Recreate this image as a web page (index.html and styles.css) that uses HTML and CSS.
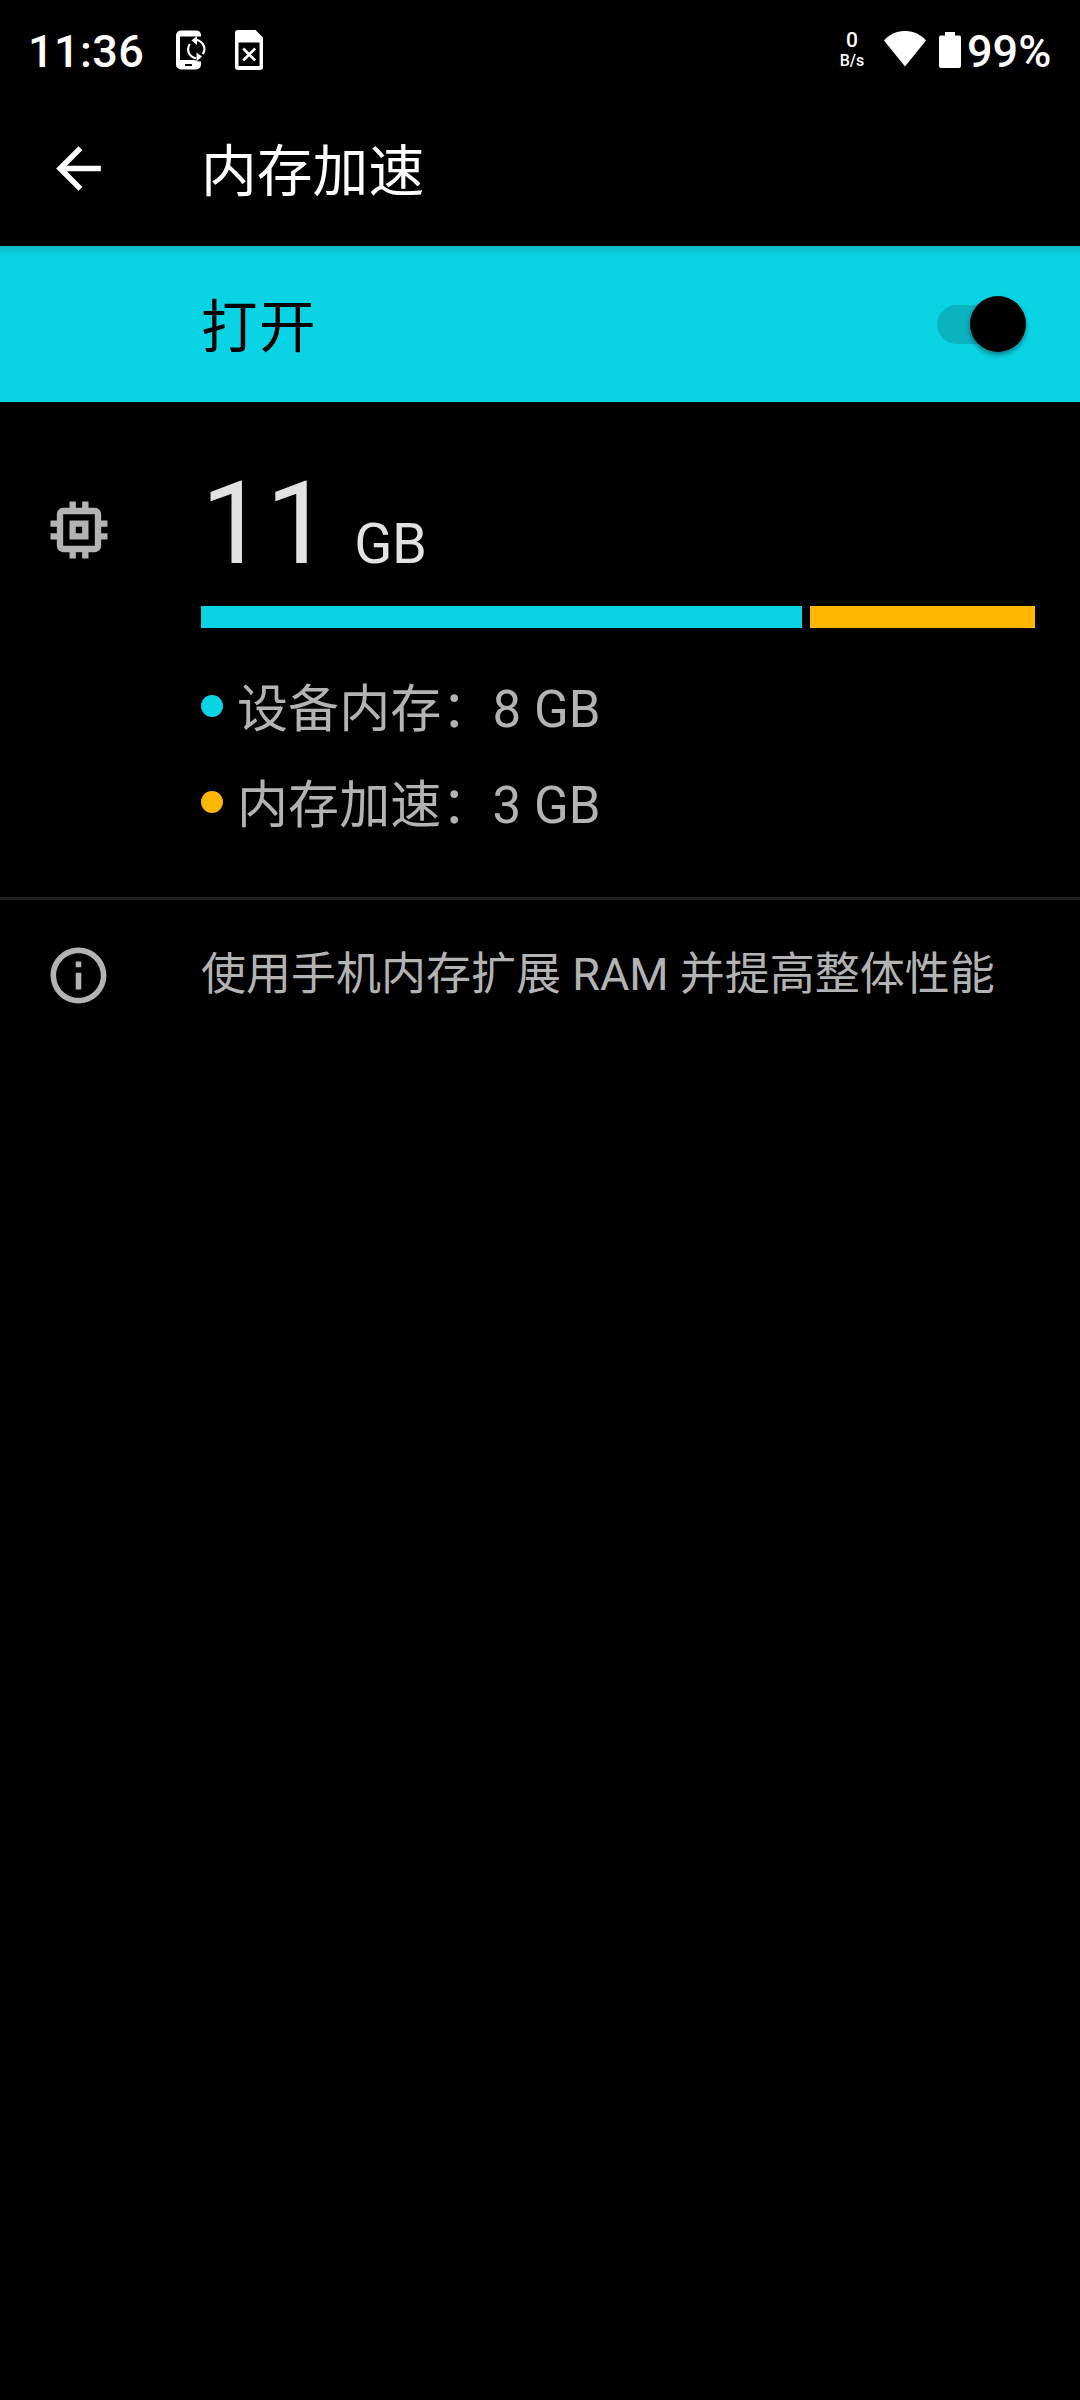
FILE: index.html
```html
<!DOCTYPE html>
<html lang="zh-CN">
<head>
<meta charset="utf-8">
<title>内存加速</title>
<link rel="stylesheet" href="styles.css">
</head>
<body>
<div class="status-bar">
  <span class="clock">11:36</span>
  <svg class="phone-icon" width="30" height="40" viewBox="0 0 30 40">
    <path fill="#fff" fill-rule="evenodd" d="M5 .5h15a5 5 0 0 1 5 4v2H4v23.500h14.500a12 12 0 0 0 6.500 1.500v3a5 5 0 0 1-5 5H5a5 5 0 0 1-5-5v-29a5 5 0 0 1 5-5zM9 34v2h7v-2z"/>
    <path fill="none" stroke="#fff" stroke-width="2.200" d="M13.800 14c-3.400 5-1.600 12.500 6.200 14.500M26.800 24c3.400-5 1.200-12.300-6.500-14.300"/>
    <path fill="#fff" d="M15.500 10.500l5.500-4.500v9zM26 26.500l-5.500 5v-9z"/>
  </svg>
  <svg class="sim-icon" width="28" height="40" viewBox="0 0 28 40">
    <path fill="#fff" fill-rule="evenodd" d="M3 0h17.500L28 7.500V37a3 3 0 0 1-3 3H3a3 3 0 0 1-3-3V3a3 3 0 0 1 3-3zM3.500 12.500v23.500h21V12.500z"/>
    <path stroke="#fff" stroke-width="2.600" d="M8.200 18.500l12 12M20.200 18.500l-12 12"/>
  </svg>
  <div class="net-speed"><span class="net-value">0</span><span class="net-unit">B/s</span></div>
  <svg class="wifi-icon" width="42" height="36" viewBox="0 0 42 36"><path fill="#fff" d="M0 9.500C11-3.200 31-3.200 42 9.500L21 35.500z"/></svg>
  <svg class="battery-icon" width="22" height="36" viewBox="0 0 22 36"><path fill="#fff" d="M6 0h10v3.500h4a2 2 0 0 1 2 2V34a2 2 0 0 1-2 2H2a2 2 0 0 1-2-2V5.500a2 2 0 0 1 2-2h4z"/></svg>
  <span class="battery-level">99%</span>
</div>
<header class="toolbar">
  <div class="icon-slot"><svg width="67" height="67" viewBox="0 0 24 24" fill="#fff"><path d="M20 11H7.830l5.590-5.590L12 4l-8 8 8 8 1.410-1.410L7.830 13H20z"/></svg></div>
  <h1 class="title">内存加速</h1>
</header>
<div class="switch-bar">
  <span class="switch-label">打开</span>
  <div class="switch"><div class="thumb"></div></div>
</div>
<section class="memory">
  <div class="icon-slot memory-icon"><svg width="76" height="76" viewBox="0 0 24 24" fill="#b3b3b3"><path d="M15 9H9v6h6V9zm-2 4h-2v-2h2v2zm8-2V9h-2V7c0-1.100-.9-2-2-2h-2V3h-2v2h-2V3H9v2H7c-1.100 0-2 .9-2 2v2H3v2h2v2H3v2h2v2c0 1.100.9 2 2 2h2v2h2v-2h2v2h2v-2h2c1.100 0 2-.9 2-2v-2h2v-2h-2v-2h2zm-4 6H7V7h10v10z"/></svg></div>
  <div class="memory-body">
    <div class="total"><span class="total-value">11</span><span class="total-unit">GB</span></div>
    <div class="bar"><div class="bar-device"></div><div class="bar-boost"></div></div>
    <div class="legend"><i class="dot dot-device"></i><span class="legend-text">设备内存：8 GB</span></div>
    <div class="legend"><i class="dot dot-boost"></i><span class="legend-text">内存加速：3 GB</span></div>
  </div>
</section>
<section class="info">
  <div class="icon-slot"><svg width="67" height="67" viewBox="0 0 24 24" fill="#b3b3b3"><path d="M11 7h2v2h-2zM11 11h2v6h-2zM12 2C6.480 2 2 6.480 2 12s4.480 10 10 10 10-4.480 10-10S17.520 2 12 2zm0 18c-4.410 0-8-3.590-8-8s3.590-8 8-8 8 3.590 8 8-3.590 8-8 8z"/></svg></div>
  <p class="info-text">使用手机内存扩展 RAM 并提高整体性能</p>
</section>
</body>
</html>
```
FILE: styles.css
```css
* { box-sizing: border-box; }
body {
  margin: 0;
  width: 1080px;
  min-height: 2400px;
  background: #000;
  color: #fff;
  font-family: Roboto, "Noto Sans CJK SC", sans-serif;
}
svg { display: block; flex: none; }
.status-bar {
  display: flex;
  align-items: flex-start;
  height: 90px;
  padding: 30px 0 0 28px;
  font-size: 45px;
  line-height: 44px;
  font-weight: 500;
}
.clock { width: 148px; letter-spacing: .4px; }
.phone-icon { margin-right: 29px; }
.net-speed {
  display: flex;
  flex-direction: column;
  align-items: center;
  width: 24px;
  margin-left: 577px;
}
.net-value { font-size: 21px; line-height: 21px; }
.net-unit { font-size: 16px; line-height: 19px; }
.wifi-icon { margin: 1px 0 0 20px; }
.battery-icon { margin: 2px 0 0 13px; }
.battery-level { margin-left: 6px; }
.toolbar { display: flex; align-items: center; height: 156px; }
.icon-slot { flex: none; width: 201px; padding-left: 45px; }
.title { margin: 0; padding-top: 8px; font-size: 55.800px; font-weight: 400; line-height: 80px; }
.switch-bar {
  display: flex;
  align-items: center;
  justify-content: space-between;
  height: 156px;
  padding: 0 54px 0 201px;
  background: linear-gradient(rgba(0, 0, 0, .13), transparent 11px) #0ad4e4;
  color: #000;
}
.switch-label { padding-top: 8px; font-size: 56.500px; line-height: 80px; letter-spacing: 1.500px; }
.switch {
  display: flex;
  align-items: center;
  justify-content: flex-end;
  width: 89px;
  height: 39px;
  border-radius: 20px;
  background: linear-gradient(90deg, #0bb2c0 60px, transparent 60px);
}
.thumb {
  width: 56px;
  height: 56px;
  border-radius: 50%;
  background: #000;
  box-shadow: 0 3px 5px rgba(0, 0, 0, .4);
}
.memory {
  display: flex;
  height: 498px;
  padding: 68px 45px 0 0;
  border-bottom: 3px solid #1f1f1f;
}
.memory-icon { padding: 22px 0 0 40.500px; }
.memory-body { flex: 1; }
.total {
  display: flex;
  align-items: baseline;
  gap: 24px;
  height: 136px;
  color: #e2e2e2;
  line-height: 108px;
}
.total-value { font-size: 115px; }
.total-unit { font-size: 56px; letter-spacing: -.5px; }
.bar { display: flex; gap: 8px; height: 22px; margin-bottom: 30px; }
.bar-device { flex: 601; background: #0ad4e4; }
.bar-boost { flex: 225; background: #ffb700; }
.legend {
  display: flex;
  align-items: center;
  gap: 14px;
  height: 96px;
  color: #b3b3b3;
  font-size: 51px;
  line-height: 74px;
}
.legend-text { padding-top: 7px; letter-spacing: .1px; }
.dot { width: 22px; height: 22px; border-radius: 50%; }
.dot-device { background: #0ad4e4; }
.dot-boost { background: #ffb700; }
.info { display: flex; align-items: center; height: 150px; color: #b3b3b3; }
.info-text { margin: 0; font-size: 45px; line-height: 66px; }
```
